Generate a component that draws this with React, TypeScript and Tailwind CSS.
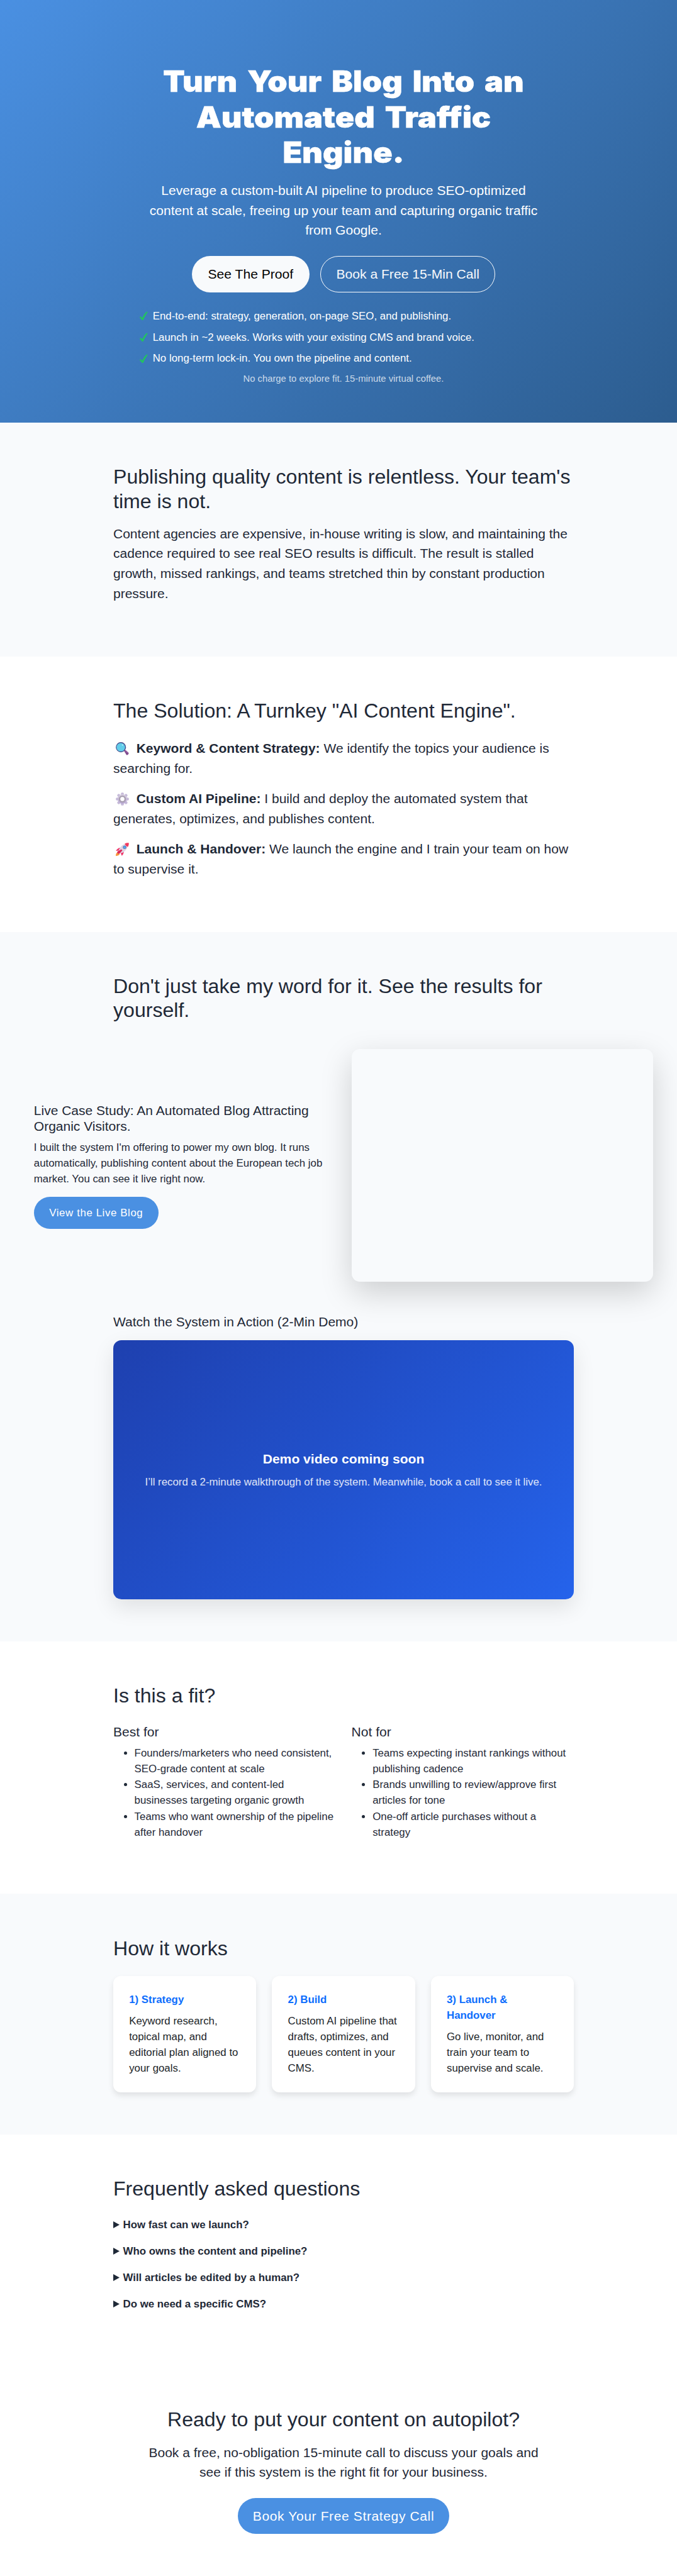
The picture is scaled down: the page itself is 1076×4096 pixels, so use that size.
import type { ReactNode } from "react";

const steps = [
  ["1) Strategy", "Keyword research,\ntopical map, and\neditorial plan aligned to\nyour goals."],
  ["2) Build", "Custom AI pipeline that\ndrafts, optimizes, and\nqueues content in your\nCMS."],
  ["3) Launch &\nHandover", "Go live, monitor, and\ntrain your team to\nsupervise and scale."],
];

const fit = [
  {
    title: "Best for",
    items: [
      "Founders/marketers who need consistent,\nSEO-grade content at scale",
      "SaaS, services, and content-led\nbusinesses targeting organic growth",
      "Teams who want ownership of the pipeline\nafter handover",
    ],
  },
  {
    title: "Not for",
    items: [
      "Teams expecting instant rankings without\npublishing cadence",
      "Brands unwilling to review/approve first\narticles for tone",
      "One-off article purchases without a\nstrategy",
    ],
  },
];

const promises = [
  "End-to-end: strategy, generation, on-page SEO, and publishing.",
  "Launch in ~2 weeks. Works with your existing CMS and brand voice.",
  "No long-term lock-in. You own the pipeline and content.",
];

const questions = [
  "How fast can we launch?",
  "Who owns the content and pipeline?",
  "Will articles be edited by a human?",
  "Do we need a specific CMS?",
];

function Check() {
  return (
    <svg className="h-[13px] w-[13px] shrink-0 overflow-visible" viewBox="0 0 15 15.5" fill="#22c55e" stroke="#22c55e" strokeWidth="0.6">
      <path d="M0 10.6C.2 9 1.6 8.600 2.600 9.400L4.700 12C6.600 7.500 9.500 3 12.300.300L14.700.100C11.600 4.600 8.500 9.600 6.600 14.700C5.700 15.600 4.700 15.500 4.100 15C2.900 13 1.800 11.500 0 10.600Z" />
    </svg>
  );
}

function SearchEmoji() {
  return (
    <svg className="h-[21px] w-[21px]" viewBox="0 0 25 25">
      <path d="M15.500 16.500l2-2 6.500 5.500c1.500 2-1.500 5.500-3.800 4.200z" fill="#7d4888" />
      <path d="M17 17l2-1.500 4.500 4.500-1 2z" fill="#935aa0" />
      <circle cx="9.700" cy="9.700" r="9.600" fill="#47518f" />
      <circle cx="9.500" cy="9.700" r="8" fill="#62cdea" />
      <circle cx="12.800" cy="5.600" r="1.300" fill="#b4edf8" />
    </svg>
  );
}

function GearEmoji() {
  const angles = [0, 45, 90, 135, 180, 225, 270, 315];
  return (
    <svg className="h-[21px] w-[21px]" viewBox="0 0 25 25">
      <defs>
        <linearGradient id="gear" x1="0" y1="0" x2="0" y2="1">
          <stop offset="0" stopColor="#d8d0e0" />
          <stop offset="1" stopColor="#b7a6d3" />
        </linearGradient>
      </defs>
      {angles.map((a) => (
        <rect key={a} x="9.800" y="0.200" width="5.400" height="8" rx="2" fill="#c6bad9" transform={`rotate(${a} 12.500 12.500)`} />
      ))}
      <circle cx="12.500" cy="12.500" r="9" fill="url(#gear)" />
      <circle cx="12.500" cy="12.500" r="5.300" fill="none" stroke="#a79eae" strokeWidth="2.600" />
      <circle cx="12.500" cy="12.500" r="3.800" fill="#fff" />
    </svg>
  );
}

function RocketEmoji() {
  return (
    <svg className="h-[21px] w-[21px]" viewBox="0 0 25 25">
      <path d="M3.500 18l4 3.500c-1 2.500-4 3.200-7.500 3.500 0-3 1-6 3.500-7z" fill="#f9943b" />
      <path d="M9 9.500C5 9.500 2 12 .300 15.500l6-.500zM15 16c.500 3.500-1 6.500-3.500 8.800L9 19z" fill="#f0376a" />
      <path d="M23.500 1.500C16 1 10 5 6 13l-1 4 3.500 3L12.500 19c7-4 11-10 11-17.500z" fill="#dfd5e3" />
      <path d="M24.700.300C21.500 0 19 .600 17 1.800c1 3 3 5 6 6 1.300-2.300 1.900-4.800 1.700-7.500z" fill="#f23a5e" />
      <path d="M10.500 12.500l2 2-6 6.500-3.500-1.500c-.500-1 0-2.500.500-3z" fill="#d92b5c" />
      <circle cx="16.700" cy="8.500" r="3.200" fill="#6a6ba5" />
      <circle cx="16.700" cy="8.500" r="2.200" fill="#49a9f5" />
    </svg>
  );
}

function Heading({ children }: { children: ReactNode }) {
  return <h2 className="whitespace-pre-line text-[32.1px] leading-[38.4px]">{children}</h2>;
}

function Feature({ icon, title, first, second }: { icon: ReactNode; title: string; first: string; second: string }) {
  return (
    <li className="mb-[16.9px] h-[63.1px] text-[21.03px] leading-[31.55px]">
      <div className="flex h-[31.1px] whitespace-pre">
        <span className="flex w-[36.7px] items-center pl-[4.2px]">{icon}</span>
        <b>{title} </b>
        <span>{first}</span>
      </div>
      <div>{second}</div>
    </li>
  );
}

export default function App() {
  return (
    <div className="h-[4096px] w-[1076px] overflow-hidden bg-white font-['Liberation_Sans',Arial,sans-serif] text-[#1f2937]">
      <div className="w-[1092px]">
        <header className="h-[672.2px] bg-[linear-gradient(135deg,#4a90e2,#2c5c8e)] pt-[101px] text-white">
          <div className="mx-auto w-[648px] text-center">
            <h1 className="scale-x-[1.08] whitespace-nowrap font-['Inter'] text-[46.6px] leading-[56.53px] font-black [word-spacing:5.5px] [-webkit-text-stroke:0.5px_white]">
              Turn Your Blog Into an
              <br />
              Automated Traffic
              <br />
              Engine.
            </h1>
            <p className="mt-[16.6px] whitespace-pre-line text-[21.03px] leading-[31.55px]">
              {"Leverage a custom-built AI pipeline to produce SEO-optimized\ncontent at scale, freeing up your team and capturing organic traffic\nfrom Google."}
            </p>
            <div className="mt-[25px] flex justify-center gap-[16.8px] text-[21.1px]">
              <a className="flex h-[58.4px] w-[187.6px] items-center justify-center rounded-full bg-[#f8fafc] text-black">See The Proof</a>
              <a className="flex h-[58.4px] w-[278.5px] items-center justify-center rounded-full border border-[#f8fafc] text-[#f8fafc]">
                Book a Free 15-Min Call
              </a>
            </div>
            <ul className="mt-[25px] text-left text-[16.85px] leading-[25.24px]">
              {promises.map((t) => (
                <li key={t} className="mb-[8.4px] flex items-center gap-[7.7px]">
                  <Check />
                  {t}
                </li>
              ))}
            </ul>
            <p className="text-[14.8px] leading-[22.1px] text-white/75">No charge to explore fit. 15-minute virtual coffee.</p>
          </div>
        </header>

        <section className="h-[371.8px] bg-[#f8fafc] pt-[67.3px]">
          <div className="mx-auto w-[732px]">
            <Heading>{"Publishing quality content is relentless. Your team's\ntime is not."}</Heading>
            <p className="mt-[16.6px] whitespace-pre-line text-[21.03px] leading-[31.55px]">
              {"Content agencies are expensive, in-house writing is slow, and maintaining the\ncadence required to see real SEO results is difficult. The result is stalled\ngrowth, missed rankings, and teams stretched thin by constant production\npressure."}
            </p>
          </div>
        </section>

        <section className="h-[437.8px] bg-white pt-[67.3px]">
          <div className="mx-auto w-[732px]">
            <Heading>The Solution: A Turnkey "AI Content Engine".</Heading>
            <ul className="mt-[24.8px]">
              <Feature
                icon={<SearchEmoji />}
                title="Keyword & Content Strategy:"
                first="We identify the topics your audience is"
                second="searching for."
              />
              <Feature
                icon={<GearEmoji />}
                title="Custom AI Pipeline:"
                first="I build and deploy the automated system that"
                second="generates, optimizes, and publishes content."
              />
              <Feature
                icon={<RocketEmoji />}
                title="Launch & Handover:"
                first="We launch the engine and I train your team on how"
                second="to supervise it."
              />
            </ul>
          </div>
        </section>

        <section className="h-[1128.4px] bg-[#f8fafc] pt-[67.3px]">
          <div className="mx-auto w-[732px]">
            <Heading>{"Don't just take my word for it. See the results for\nyourself."}</Heading>
          </div>
          <div className="mx-auto mt-[42px] flex w-[984.4px] items-center gap-[25.2px]">
            <div className="w-[479.6px]">
              <h3 className="whitespace-pre-line text-[21.03px] leading-[25.24px]">{"Live Case Study: An Automated Blog Attracting\nOrganic Visitors."}</h3>
              <p className="mt-[8.4px] whitespace-pre-line text-[16.85px] leading-[25.24px]">
                {"I built the system I'm offering to power my own blog. It runs\nautomatically, publishing content about the European tech job\nmarket. You can see it live right now."}
              </p>
              <a className="mt-[16px] flex h-[50.5px] w-[198px] items-center justify-center rounded-full bg-[#4a90e2] text-[16.85px] tracking-[0.6px] text-white">
                View the Live Blog
              </a>
            </div>
            <div className="h-[370.6px] w-[479.6px] rounded-[13px] bg-[#f8fafc] shadow-[0_17px_50px_rgba(0,0,0,0.175)]" />
          </div>
          <div className="mx-auto mt-[50.5px] w-[732px]">
            <h3 className="text-[21.03px] leading-[25.24px]">Watch the System in Action (2-Min Demo)</h3>
            <div className="mt-[16.8px] flex h-[411.7px] flex-col items-center justify-center gap-[8.4px] rounded-[13px] bg-[linear-gradient(135deg,#1e40af,#2563eb)] text-white shadow-[0_13px_34px_rgba(0,0,0,0.1)]">
              <b className="text-[21.1px] leading-[31.55px]">Demo video coming soon</b>
              <p className="text-[16.85px] leading-[25.24px] text-white/85">
                I’ll record a 2-minute walkthrough of the system. Meanwhile, book a call to see it live.
              </p>
            </div>
          </div>
        </section>

        <section className="h-[401.1px] bg-white pt-[67.3px]">
          <div className="mx-auto w-[732px]">
            <Heading>Is this a fit?</Heading>
            <div className="mt-[25.2px] grid grid-cols-2 gap-[25.2px]">
              {fit.map((col) => (
                <div key={col.title}>
                  <h3 className="text-[21.03px] leading-[25.24px]">{col.title}</h3>
                  <ul className="mt-[8.4px] list-disc pl-[33.6px] text-[16.85px] leading-[25.24px]">
                    {col.items.map((t) => (
                      <li key={t} className="whitespace-pre">
                        {t}
                      </li>
                    ))}
                  </ul>
                </div>
              ))}
            </div>
          </div>
        </section>

        <section className="h-[382.8px] bg-[#f8fafc] pt-[67.3px]">
          <div className="mx-auto w-[732px]">
            <Heading>How it works</Heading>
            <div className="mt-[25px] grid grid-cols-3 gap-[25.2px] text-[16.85px] leading-[25.24px]">
              {steps.map(([title, text]) => (
                <div key={title} className="h-[185.1px] rounded-[12px] bg-white p-[25.2px] text-[#212529] shadow-[0_5px_10px_rgba(0,0,0,0.1)]">
                  <b className="block whitespace-pre text-[#0d6efd]">{title}</b>
                  <p className="mt-[8.4px] whitespace-pre">{text}</p>
                </div>
              ))}
            </div>
          </div>
        </section>

        <section className="h-[367px] bg-white pt-[67.3px]">
          <div className="mx-auto w-[732px]">
            <Heading>Frequently asked questions</Heading>
            <div className="mt-[25.2px] flex flex-col gap-[16.8px] text-[16.85px] leading-[25.24px] font-bold">
              {questions.map((q) => (
                <div key={q} className="flex items-center gap-[5.5px]">
                  <svg className="h-[11px] w-[10px]" viewBox="0 0 10 11" fill="#1f2937">
                    <path d="M0 0L10 5.500L0 11Z" />
                  </svg>
                  {q}
                </div>
              ))}
            </div>
          </div>
        </section>

        <section className="bg-white pt-[67.3px] text-center">
          <Heading>Ready to put your content on autopilot?</Heading>
          <p className="mt-[16.8px] whitespace-pre-line text-[21.03px] leading-[31.55px]">
            {"Book a free, no-obligation 15-minute call to discuss your goals and\nsee if this system is the right fit for your business."}
          </p>
          <a className="mx-auto mt-[25.2px] flex h-[57.6px] w-[336.5px] items-center justify-center rounded-full bg-[#4a90e2] text-[21.03px] tracking-[0.62px] text-white">
            Book Your Free Strategy Call
          </a>
        </section>
      </div>
    </div>
  );
}
